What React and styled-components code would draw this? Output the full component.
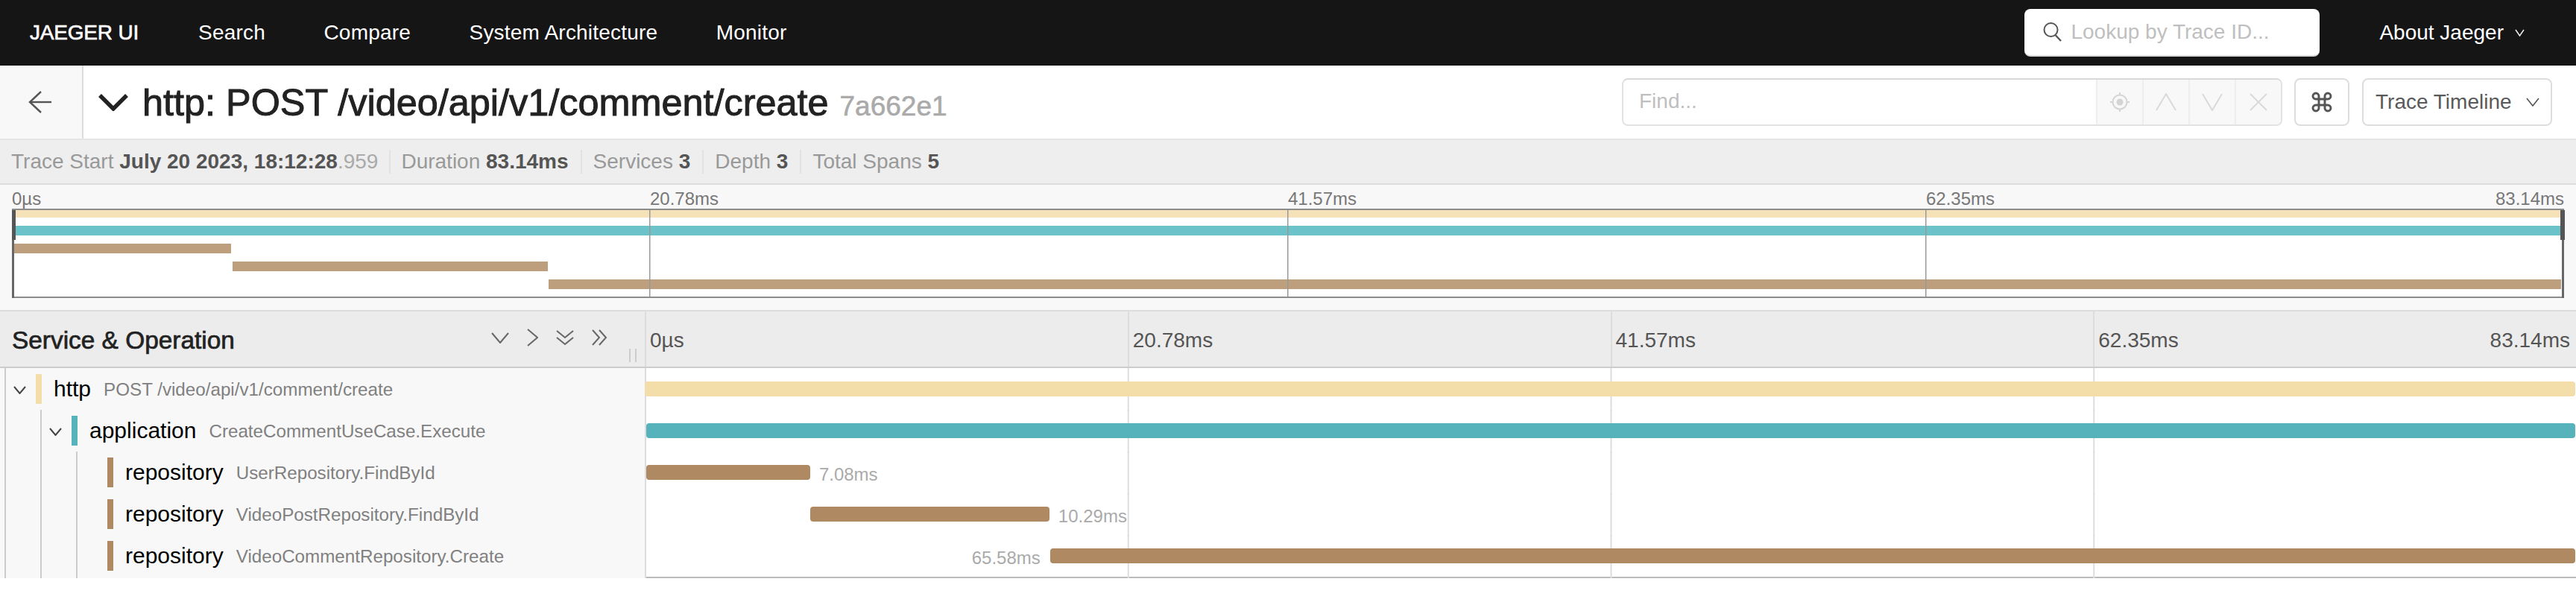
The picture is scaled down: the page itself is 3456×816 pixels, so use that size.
import styled, { createGlobalStyle } from "styled-components";

const GlobalStyle = createGlobalStyle`
  html, body {
    margin: 0;
    background: #fff;
    font-family: "Liberation Sans", Arial, sans-serif;
  }
  * {
    box-sizing: border-box;
  }
`;

const TOTAL_MS = 83.14;

const spans = [
  { id: 1, depth: 0, service: "http", op: "POST /video/api/v1/comment/create", color: "#f3dda8", start: 0, dur: 83.12, toggle: true },
  { id: 2, depth: 1, service: "application", op: "CreateCommentUseCase.Execute", color: "#56b3bb", start: 0.06, dur: 83.06, toggle: true },
  { id: 3, depth: 2, service: "repository", op: "UserRepository.FindById", color: "#ae8962", start: 0.06, dur: 7.06, label: "7.08ms" },
  { id: 4, depth: 2, service: "repository", op: "VideoPostRepository.FindById", color: "#ae8962", start: 7.13, dur: 10.29, label: "10.29ms" },
  { id: 5, depth: 2, service: "repository", op: "VideoCommentRepository.Create", color: "#ae8962", start: 17.45, dur: 65.67, label: "65.58ms", labelLeft: true },
];

const ticks = ["0µs", "20.78ms", "41.57ms", "62.35ms", "83.14ms"];

const Caret = ({ w, h, points, color = "#555", stroke = 2 }) => (
  <svg width={w} height={h} viewBox={`0 0 ${w} ${h}`} style={{ flex: "none" }}>
    {points.map((p) => (
      <polyline key={p} points={p} fill="none" stroke={color} strokeWidth={stroke} />
    ))}
  </svg>
);

const Minimap = () => (
  <svg width="3424" height="120" viewBox="0 0 3424 120" style={{ display: "block", overflow: "visible" }}>
    <rect x="1" y="1" width="3422" height="118" fill="#fff" stroke="#8c8c8c" strokeWidth="2" />
    <rect x="3" y="2" width="3417" height="10" fill="#f5e2b8" />
    <rect x="3" y="23" width="3417" height="13" fill="#6cc2c9" />
    <rect x="3" y="47" width="291" height="13" fill="#bd9f7e" />
    <rect x="296" y="71" width="423" height="13" fill="#bd9f7e" />
    <rect x="720" y="95" width="2700" height="13" fill="#bd9f7e" />
    <rect x="855" y="2" width="1.5" height="116" fill="#999" />
    <rect x="1711" y="2" width="1.5" height="116" fill="#999" />
    <rect x="2567" y="2" width="1.5" height="116" fill="#999" />
    <rect x="0" y="2" width="3" height="118" fill="#666" />
    <rect x="3421" y="2" width="3" height="118" fill="#666" />
    <rect x="0" y="2" width="5" height="40" fill="#555" />
    <rect x="3419" y="2" width="6" height="40" fill="#555" />
  </svg>
);

const App = () => {
  return (
    <Page>
      <GlobalStyle />
      <NavBar>
        <Brand>JAEGER UI</Brand>
        <NavLink>Search</NavLink>
        <NavLink>Compare</NavLink>
        <NavLink>System Architecture</NavLink>
        <NavLink>Monitor</NavLink>
        <NavSpacer />
        <LookupBox>
          <svg width="26" height="26" viewBox="0 0 26 26" style={{ flex: "none" }}>
            <circle cx="10.5" cy="10" r="9" fill="none" stroke="#555" strokeWidth="2" />
            <line x1="16.5" y1="17" x2="24" y2="25" stroke="#555" strokeWidth="2.4" />
          </svg>
          <LookupText>Lookup by Trace ID...</LookupText>
        </LookupBox>
        <AboutMenu>
          About Jaeger
          <Caret w={13} h={10} points={["1,1 6.5,9 12,1"]} color="#eee" stroke={1.5} />
        </AboutMenu>
      </NavBar>

      <TitleBar>
        <BackButton>
          <svg width="32" height="30" viewBox="0 0 32 30">
            <polyline points="17,1 2,15 17,29" fill="none" stroke="#555" strokeWidth="2.4" />
            <line x1="2" y1="15" x2="31" y2="15" stroke="#555" strokeWidth="2.4" />
          </svg>
        </BackButton>
        <Caret w={40} h={24} points={["2,3 20,21 38,3"]} color="#222" stroke={5.5} />
        <TraceTitle>
          http: POST /video/api/v1/comment/create
          <TraceId>7a662e1</TraceId>
        </TraceTitle>
        <TitleSpacer />
        <FindBox>
          <FindText>Find...</FindText>
          <FindButton>
            <svg width="26" height="26" viewBox="0 0 26 26">
              <circle cx="13" cy="13" r="9.5" fill="none" stroke="#d4d4d4" strokeWidth="2" />
              <circle cx="13" cy="13" r="4.5" fill="#d4d4d4" />
              <path d="M13 0v4M13 22v4M0 13h4M22 13h4" stroke="#d4d4d4" strokeWidth="2" />
            </svg>
          </FindButton>
          <FindButton>
            <Caret w={28} h={24} points={["1,23 14,1 27,23"]} color="#d9d9d9" />
          </FindButton>
          <FindButton>
            <Caret w={28} h={24} points={["1,1 14,23 27,1"]} color="#d9d9d9" />
          </FindButton>
          <FindButton>
            <Caret w={24} h={24} points={["1,1 23,23", "23,1 1,23"]} color="#d9d9d9" />
          </FindButton>
        </FindBox>
        <KeysButton>
          <svg width="32" height="32" viewBox="0 0 24 24" fill="none" stroke="#555" strokeWidth="2.2">
            <path d="M15 6v12a3 3 0 1 0 3-3H6a3 3 0 1 0 3 3V6a3 3 0 1 0-3 3h12a3 3 0 1 0-3-3" />
          </svg>
        </KeysButton>
        <ViewSelect>
          Trace Timeline
          <Caret w={18} h={12} points={["1,1 9,11 17,1"]} color="#555" stroke={1.6} />
        </ViewSelect>
      </TitleBar>

      <MetaBar>
        <MetaItem>
          Trace Start <b>July 20 2023, 18:12:28</b>
          <MetaFraction>.959</MetaFraction>
        </MetaItem>
        <MetaItem>
          Duration <b>83.14ms</b>
        </MetaItem>
        <MetaItem>
          Services <b>3</b>
        </MetaItem>
        <MetaItem>
          Depth <b>3</b>
        </MetaItem>
        <MetaItem>
          Total Spans <b>5</b>
        </MetaItem>
      </MetaBar>

      <MinimapPanel>
        <MinimapTicks>
          <TickCell>{ticks[0]}</TickCell>
          <TickCell>{ticks[1]}</TickCell>
          <TickCell>{ticks[2]}</TickCell>
          <TickCell>
            <span>{ticks[3]}</span>
            <span>{ticks[4]}</span>
          </TickCell>
        </MinimapTicks>
        <Minimap />
      </MinimapPanel>

      <TraceHeader>
        <HeaderLeft>
          <HeaderTitle>Service &amp; Operation</HeaderTitle>
          <CollapseIcons>
            <Caret w={24} h={15} points={["1,1 12,14 23,1"]} color="#666" />
            <Caret w={15} h={24} points={["1,1 14,12 1,23"]} color="#666" />
            <Caret w={24} h={21} points={["1,1 12,10 23,1", "1,10 12,19 23,10"]} color="#666" />
            <Caret w={21} h={22} points={["1,1 10,11 1,21", "10,1 19,11 10,21"]} color="#666" />
          </CollapseIcons>
          <ResizeGrip />
        </HeaderLeft>
        <HeaderTicks>
          <HeaderTick>{ticks[0]}</HeaderTick>
          <HeaderTick>{ticks[1]}</HeaderTick>
          <HeaderTick>{ticks[2]}</HeaderTick>
          <HeaderTick>
            <span>{ticks[3]}</span>
            <span>{ticks[4]}</span>
          </HeaderTick>
        </HeaderTicks>
      </TraceHeader>

      <SpanList>
        {spans.map((span) => (
          <SpanRow key={span.id}>
            <SpanName>
              {Array.from({ length: span.depth + 1 }, (_, i) => (
                <Guide key={i} $last={i === span.depth} />
              ))}
              <Toggle>
                {span.toggle && <Caret w={17} h={11} points={["1,1 8.5,10 16,1"]} color="#444" />}
              </Toggle>
              <ColorTag $color={span.color} />
              <ServiceName>{span.service}</ServiceName>
              <OperationName>{span.op}</OperationName>
            </SpanName>
            <SpanTrack>
              <SpanBar
                $color={span.color}
                style={{
                  left: `${(span.start / TOTAL_MS) * 100}%`,
                  width: `${(span.dur / TOTAL_MS) * 100}%`,
                }}
              >
                {span.label && <BarLabel $left={span.labelLeft}>{span.label}</BarLabel>}
              </SpanBar>
            </SpanTrack>
          </SpanRow>
        ))}
      </SpanList>
    </Page>
  );
};

export default App;

const Page = styled.div`
  width: 3456px;
  min-height: 816px;
  background: #fff;
`;

const NavBar = styled.nav`
  display: flex;
  align-items: center;
  gap: 78.5px;
  height: 88px;
  padding: 0 67px 0 40px;
  background: #151515;
  color: #fff;
  font-size: 28px;
`;

const Brand = styled.span`
  margin-right: 1.5px;
  -webkit-text-stroke: 0.6px #fff;
  letter-spacing: -0.2px;
`;

const NavLink = styled.span`
  letter-spacing: 0.2px;
`;

const NavSpacer = styled.div`
  flex: 1;
`;

const LookupBox = styled.div`
  display: flex;
  align-items: center;
  gap: 11px;
  width: 396px;
  height: 64px;
  margin-right: 1.5px;
  padding-left: 25px;
  background: #fff;
  border-radius: 8px;
  border-bottom: 2px solid #d9d9d9;
  margin-left: -78.5px;
`;

const LookupText = styled.span`
  color: #bfbfbf;
`;

const AboutMenu = styled.div`
  display: flex;
  align-items: center;
  gap: 15px;
  margin-right: 2px;
`;

const TitleBar = styled.div`
  display: flex;
  align-items: center;
  height: 100px;
  background: #fff;
  border-bottom: 2px solid #e4e4e4;
`;

const BackButton = styled.div`
  display: flex;
  align-items: center;
  justify-content: center;
  flex: none;
  width: 112px;
  height: 98px;
  margin-right: 20px;
  padding-right: 2px;
  background: #f8f8f8;
  border-right: 2px solid #ddd;
`;

const TraceTitle = styled.h1`
  margin: 0 0 0 19px;
  color: #222;
  font-size: 50.4px;
  font-weight: 400;
  white-space: nowrap;
  -webkit-text-stroke: 1px #222;
`;

const TraceId = styled.span`
  margin-left: 15px;
  color: #aaa;
  font-size: 37px;
  -webkit-text-stroke: 0.6px #aaa;
`;

const TitleSpacer = styled.div`
  flex: 1;
`;

const FindBox = styled.div`
  display: flex;
  width: 886px;
  height: 64px;
  margin-right: 16px;
  border: 2px solid #e2e2e2;
  border-top-color: #d9d9d9;
  border-radius: 8px;
  overflow: hidden;
  font-size: 28px;
`;

const FindText = styled.div`
  flex: 1;
  padding-left: 21px;
  color: #bfbfbf;
  line-height: 58px;
`;

const FindButton = styled.div`
  display: flex;
  align-items: center;
  justify-content: center;
  width: 62px;
  background: #f8f8f8;
  border-left: 2px solid #eee;
`;

const KeysButton = styled.div`
  display: flex;
  align-items: center;
  justify-content: center;
  width: 74px;
  height: 64px;
  margin-right: 17px;
  border: 2px solid #ddd;
  border-radius: 8px;
`;

const ViewSelect = styled.div`
  display: flex;
  align-items: center;
  gap: 19px;
  width: 255px;
  height: 64px;
  margin-right: 32px;
  padding-left: 16px;
  border: 2px solid #ddd;
  border-radius: 8px;
  color: #595959;
  font-size: 28px;
  white-space: nowrap;
`;

const MetaBar = styled.div`
  display: flex;
  align-items: center;
  height: 60px;
  padding-left: 15px;
  background: #eee;
  border-bottom: 2px solid #ddd;
  color: #999;
  font-size: 28px;

  b {
    color: #555;
  }
`;

const MetaItem = styled.div`
  padding-right: 16px;
  margin-right: 15px;
  border-right: 2px solid #e2e2e2;
  line-height: 32px;
  white-space: nowrap;

  &:first-child {
    margin-right: 14px;
    padding-right: 15px;
  }

  &:last-child {
    border-right: 0;
  }
`;

const MetaFraction = styled.span`
  color: #aaa;
`;

const MinimapPanel = styled.div`
  height: 170px;
  padding: 0 16px;
  background: #f8f8f8;
  border-bottom: 2px solid #ddd;
`;

const MinimapTicks = styled.div`
  display: grid;
  grid-template-columns: repeat(4, 1fr);
  height: 32px;
  color: #777;
  font-size: 24px;
  line-height: 38px;
`;

const TickCell = styled.div`
  display: flex;
  justify-content: space-between;
`;

const TraceHeader = styled.div`
  display: grid;
  grid-template-columns: 865px 1fr;
  height: 76px;
  background: #ececec;
  border-bottom: 2px solid #ccc;
`;

const HeaderLeft = styled.div`
  position: relative;
  display: flex;
  align-items: center;
  justify-content: space-between;
  padding: 0 50px 0 16px;
`;

const HeaderTitle = styled.div`
  margin-top: 3px;
  color: #222;
  font-size: 33.4px;
  -webkit-text-stroke: 0.7px #222;
`;

const CollapseIcons = styled.div`
  display: flex;
  align-items: center;
  gap: 24px;
  margin-top: -4px;
`;

const ResizeGrip = styled.div`
  position: absolute;
  right: 11px;
  top: 50px;
  width: 10px;
  height: 18px;
  border-left: 2px solid #ccc;
  border-right: 2px solid #ccc;
`;

const HeaderTicks = styled.div`
  display: grid;
  grid-template-columns: repeat(4, 1fr);
`;

const HeaderTick = styled.div`
  display: flex;
  align-items: center;
  justify-content: space-between;
  padding: 3px 8px 0 5px;
  border-left: 2px solid #ddd;
  color: #555;
  font-size: 28px;
`;

const SpanList = styled.div`
  border-bottom: 2px solid #bbb;
`;

const SpanRow = styled.div`
  display: grid;
  grid-template-columns: 865px 1fr;
  height: 56px;
`;

const SpanName = styled.div`
  display: flex;
  align-items: stretch;
  padding-left: 6px;
  background: #f8f8f8;
  white-space: nowrap;
`;

const Guide = styled.div`
  flex: none;
  width: ${(p) => (p.$last ? "12px" : "48px")};
  border-left: 2px solid #ccc;
`;

const Toggle = styled.div`
  display: flex;
  align-items: center;
  flex: none;
  width: 30px;
`;

const ColorTag = styled.div`
  flex: none;
  width: 8px;
  height: 40px;
  margin: 8px 16px 0 0;
  background: ${(p) => p.$color};
`;

const ServiceName = styled.div`
  margin-right: 17px;
  color: #000;
  font-size: 30px;
  line-height: 56px;
`;

const OperationName = styled.div`
  color: #808080;
  font-size: 24.2px;
  line-height: 58px;
`;

const SpanTrack = styled.div`
  position: relative;
  background: linear-gradient(to right, #ddd 2px, transparent 2px) 0 0 / 25% 100%;
`;

const SpanBar = styled.div`
  position: absolute;
  top: 18px;
  height: 20px;
  border-radius: 4px;
  background: ${(p) => p.$color};
`;

const BarLabel = styled.span`
  position: absolute;
  top: -2px;
  ${(p) => (p.$left ? "right: calc(100% + 13px);" : "left: calc(100% + 12px);")}
  color: #aaa;
  font-size: 24px;
  line-height: 30px;
  white-space: nowrap;
`;
